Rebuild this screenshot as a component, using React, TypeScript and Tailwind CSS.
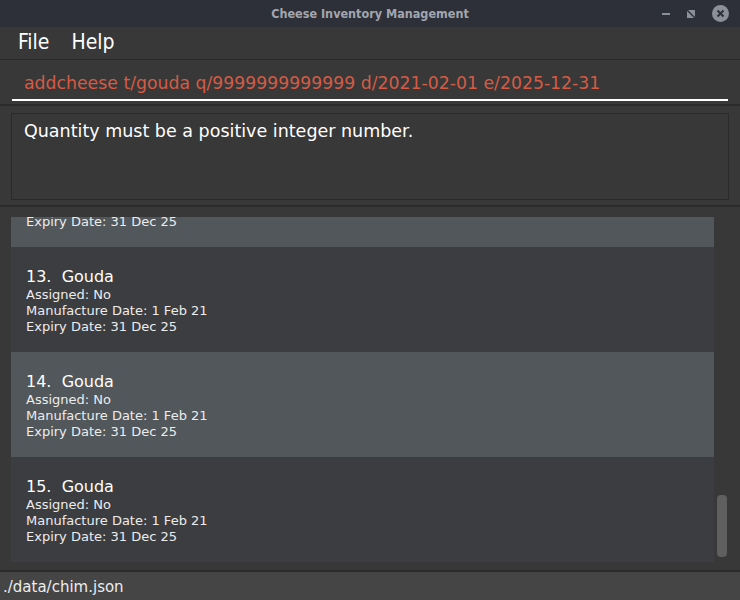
import React from "react";

const font = { fontFamily: '"DejaVu Sans", "Noto Sans", sans-serif' };
const condensed = { fontFamily: '"DejaVu Sans Condensed", "DejaVu Sans", sans-serif' };

type Cheese = { id: number; name: string; assigned: string; made: string; expiry: string };

const cheeses: Cheese[] = [12, 13, 14, 15].map((id) => ({
  id,
  name: "Gouda",
  assigned: "No",
  made: "1 Feb 21",
  expiry: "31 Dec 25",
}));

function CheeseCard({ cheese, shaded }: { cheese: Cheese; shaded: boolean }) {
  return (
    <div
      className={`h-[105px] pl-[15px] pt-[20px] text-white ${
        shaded ? "bg-[#51575a]" : "bg-[#3c3d40]"
      }`}
    >
      <div className="text-[16px] leading-[20px]">
        {cheese.id}.&nbsp; {cheese.name}
      </div>
      <div className="text-[13px] leading-[16px] text-[#ececec]">Assigned: {cheese.assigned}</div>
      <div className="text-[13px] leading-[16px] text-[#ececec]">Manufacture Date: {cheese.made}</div>
      <div className="text-[13px] leading-[16px] text-[#ececec]">Expiry Date: {cheese.expiry}</div>
    </div>
  );
}

export default function App() {
  return (
    <div className="w-[740px] h-[600px] flex flex-col bg-[#383838] overflow-hidden" style={font}>
      {/* window title bar */}
      <div className="h-[27px] shrink-0 bg-[#2d3039] flex items-center relative" style={condensed}>
        <div className="flex-1 text-center pt-[1px] text-[12.5px] font-bold text-[#a2a6ae]">
          Cheese Inventory Management
        </div>
        <div className="absolute right-[11px] top-0 h-[27px] flex items-center gap-[16px]">
          <div className="w-[8px] h-[2px] bg-[#8c9098]" />
          <svg width="10" height="10" viewBox="0 0 10 10">
            <path d="M2 1 L9 1 L9 8 Z" fill="#8c9098" />
            <path d="M1 2 L1 9 L8 9 Z" fill="#8c9098" />
          </svg>
          <svg width="17" height="17" viewBox="0 0 17 17">
            <circle cx="8.5" cy="8.5" r="8.5" fill="#8c9098" />
            <path d="M5.5 5.5 L11.5 11.5 M11.5 5.5 L5.5 11.5" stroke="#2d3039" strokeWidth="2" />
          </svg>
        </div>
      </div>

      {/* menu bar */}
      <div
        className="h-[33px] shrink-0 flex items-center gap-[22px] pl-[18px] text-[21px] text-white border-b border-[#2a2a2a]"
        style={condensed}
      >
        <span>File</span>
        <span>Help</span>
      </div>

      {/* command box */}
      <div className="h-[46px] shrink-0 px-[12px] border-b-2 border-[#2b2b2b]">
        <div className="h-[41px] border-b-2 border-white flex items-end pb-[2px] pl-[12px] text-[17.3px] text-[#d55b45]">
          addcheese t/gouda q/9999999999999 d/2021-02-01 e/2025-12-31
        </div>
      </div>

      {/* result display */}
      <div className="h-[101px] shrink-0 px-[11px] pt-[7px] pb-[5px] border-b-2 border-[#2b2b2b]">
        <div className="h-full border border-[#2a2a2a] pl-[12px] pt-[4px] text-[17.5px] text-white">
          Quantity must be a positive integer number.
        </div>
      </div>

      {/* cheese list */}
      <div className="flex-1 flex pl-[11px] pr-[10px] pt-[10px] pb-[8px] border-b-2 border-[#2b2b2b] overflow-hidden">
        <div className="flex-1 overflow-hidden">
          <div className="-mt-[75px]">
            {cheeses.map((c, i) => (
              <CheeseCard key={c.id} cheese={c} shaded={i % 2 === 0} />
            ))}
          </div>
        </div>
        <div className="w-[16px] flex flex-col justify-end items-center pb-[5px]">
          <div className="w-[10px] h-[62px] rounded-[4px] bg-[#5f5f5f]" />
        </div>
      </div>

      {/* status bar */}
      <div className="h-[28px] shrink-0 bg-[#454545] flex items-center pl-[3px] pt-[3px] text-[15px] text-[#ececec]">
        ./data/chim.json
      </div>
    </div>
  );
}
